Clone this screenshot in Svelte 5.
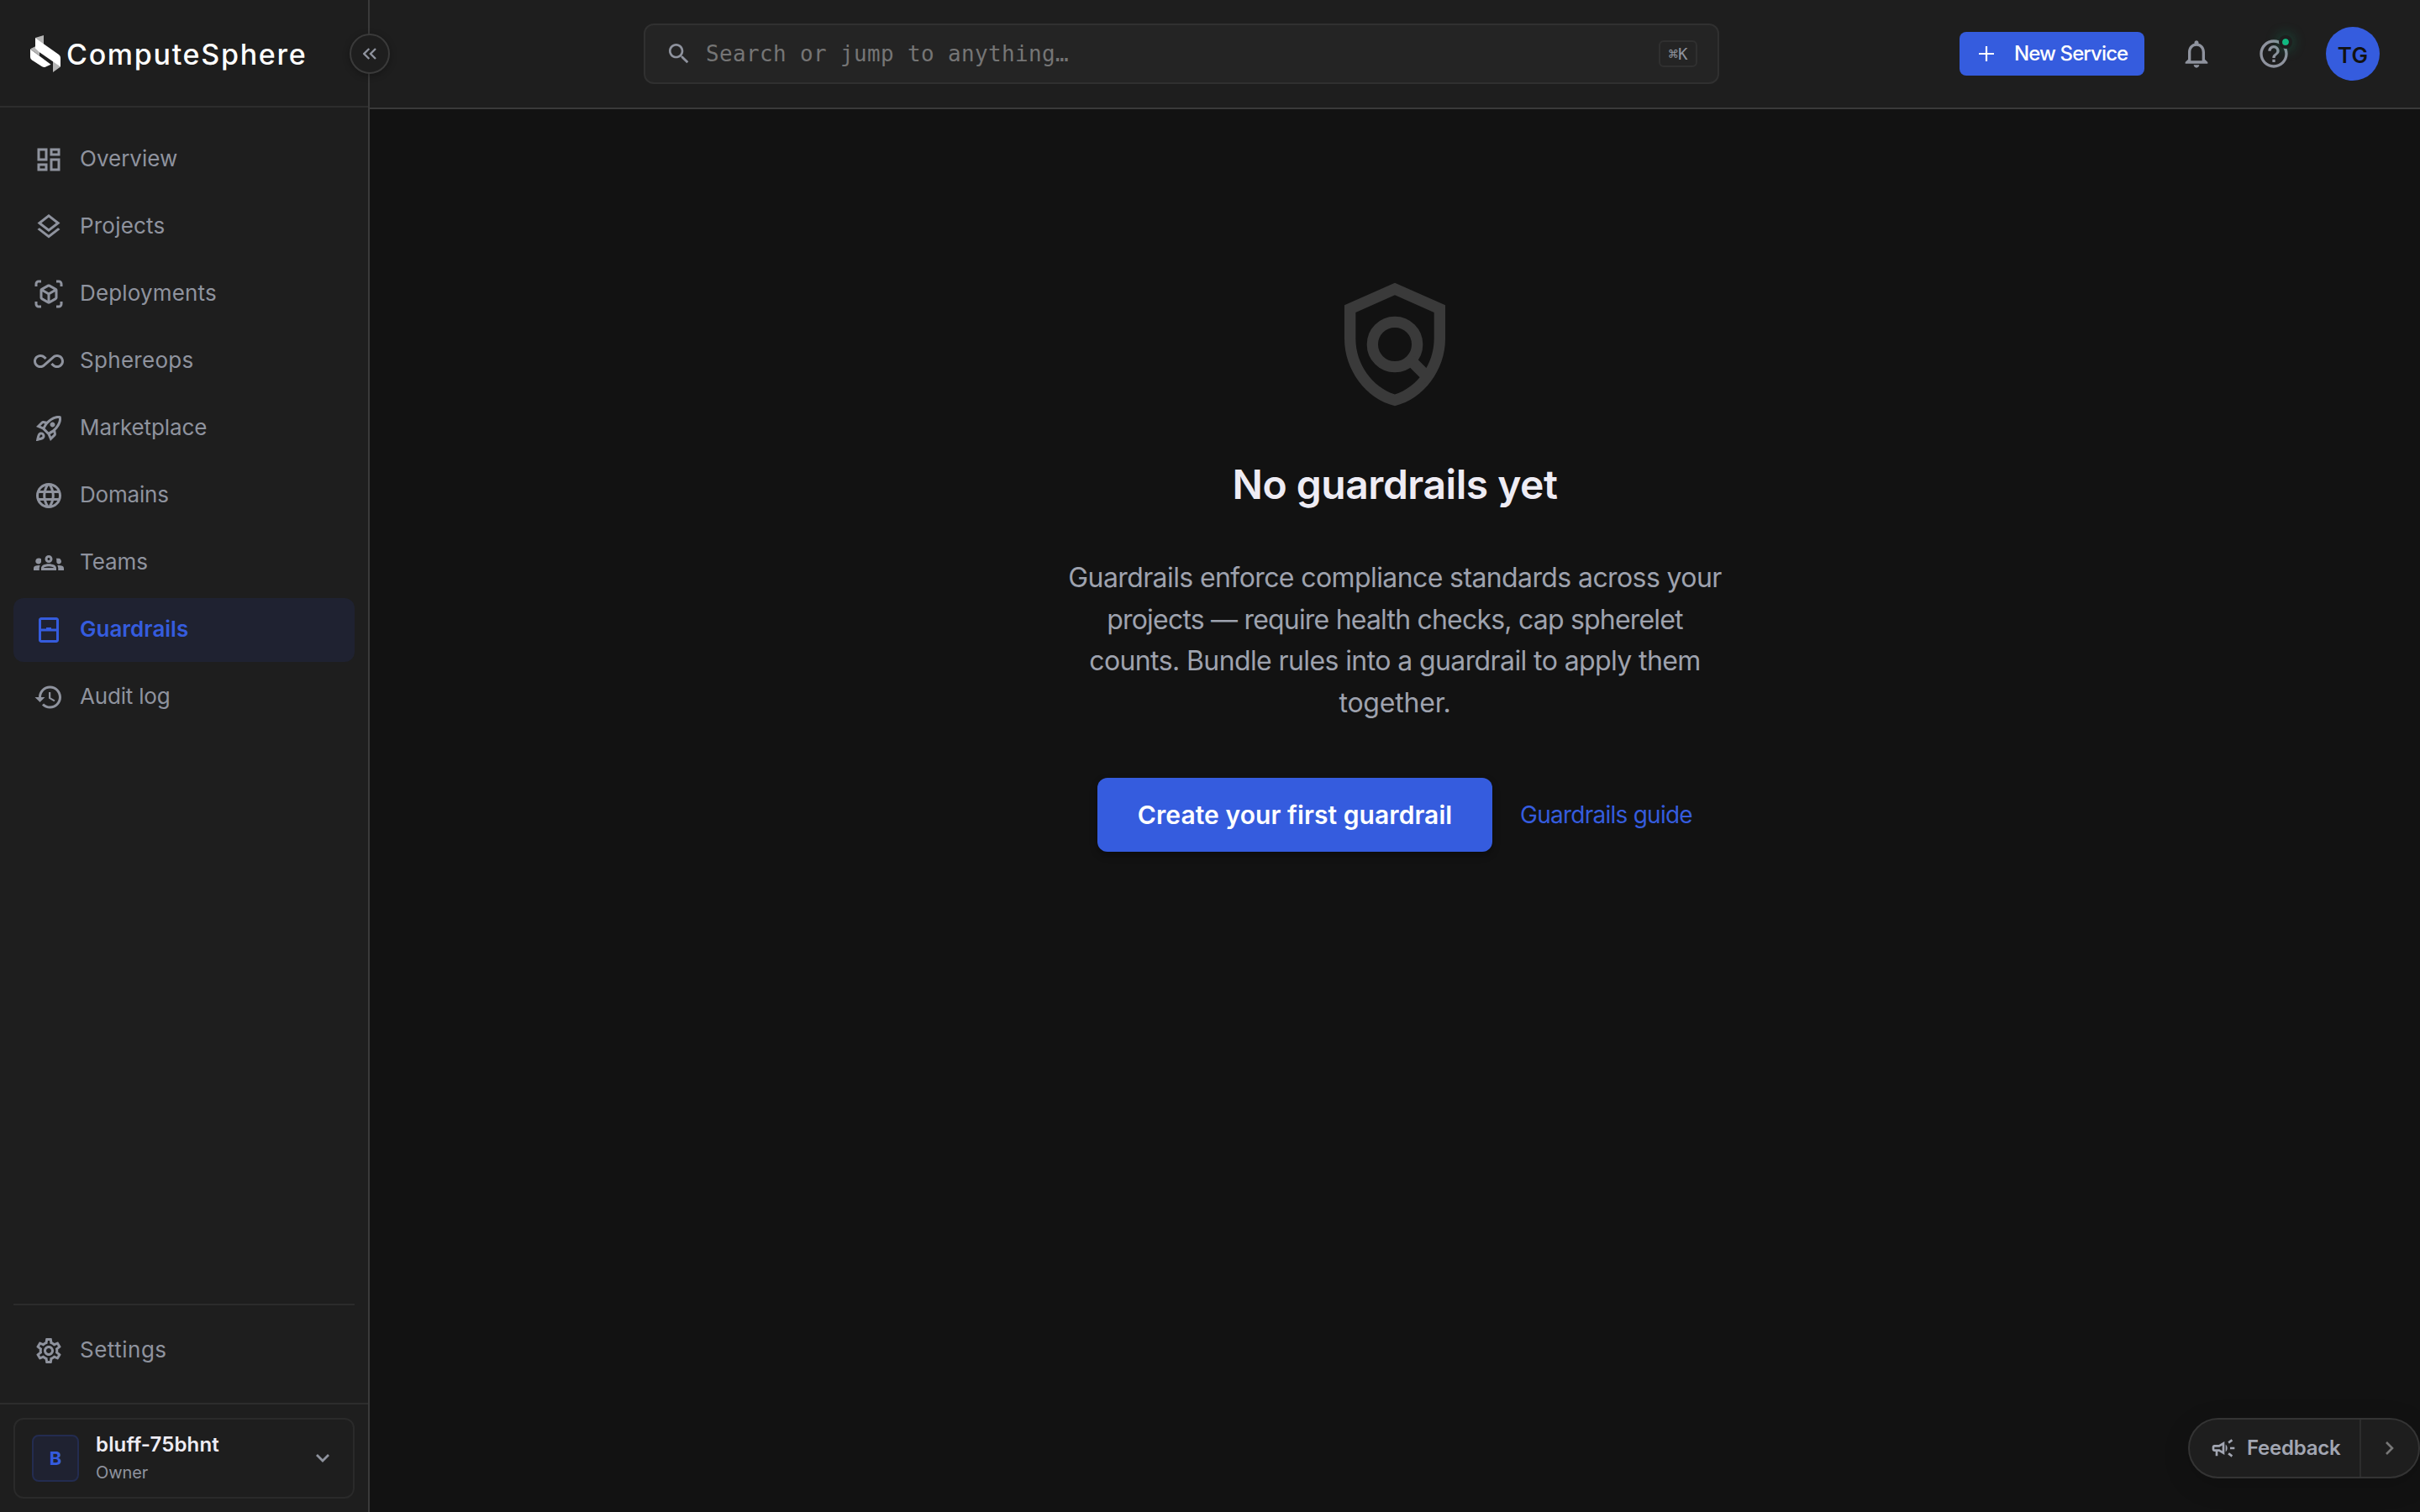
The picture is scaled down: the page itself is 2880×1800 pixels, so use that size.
<script>
	const NAV = [
		{ id: 'overview', label: 'Overview', tracking: 0 },
		{ id: 'projects', label: 'Projects', tracking: 0.2 },
		{ id: 'deployments', label: 'Deployments', tracking: 0.15 },
		{ id: 'sphereops', label: 'Sphereops', tracking: 0.3 },
		{ id: 'marketplace', label: 'Marketplace', tracking: -0.1 },
		{ id: 'domains', label: 'Domains', tracking: -0.2 },
		{ id: 'teams', label: 'Teams', tracking: -0.1 },
		{ id: 'guardrails', label: 'Guardrails', tracking: 0 },
		{ id: 'audit', label: 'Audit log', tracking: -0.2 },
	];

	const COPY = [
		{ text: 'Guardrails enforce compliance standards across your', tracking: -0.6 },
		{ text: 'projects — require health checks, cap spherelet', tracking: -0.8 },
		{ text: 'counts. Bundle rules into a guardrail to apply them', tracking: -0.6 },
		{ text: 'together.', tracking: -0.2 },
	];

	const ICONS = {
		overview: 'M19 5v2h-4V5h4M9 5v6H5V5h4m10 8v6h-4v-6h4M9 17v2H5v-2h4M21 3h-8v6h8V3zM11 3H3v10h8V3zm10 8h-8v10h8V11zm-10 4H3v6h8v-6z',
		projects: 'M11.99 18.54l-7.37-5.73L3 14.07l9 7 9-7-1.63-1.27zM12 16l7.36-5.73L21 9l-9-7-9 7 1.63 1.27L12 16zm0-11.47L17.74 9 12 13.47 6.26 9 12 4.53z',
		deployments: 'M3 4c0-.55.45-1 1-1h2V1H4C2.34 1 1 2.34 1 4v2h2V4zM3 20v-2H1v2c0 1.66 1.34 3 3 3h2v-2H4c-.55 0-1-.45-1-1zM20 1h-2v2h2c.55 0 1 .45 1 1v2h2V4c0-1.66-1.34-3-3-3zM21 20c0 .55-.45 1-1 1h-2v2h2c1.66 0 3-1.34 3-3v-2h-2v2zM19 14.87V9.13c0-.72-.38-1.38-1-1.73l-5-2.88c-.31-.18-.65-.27-1-.27s-.69.09-1 .27L6 7.39c-.62.36-1 1.02-1 1.74v5.74c0 .72.38 1.38 1 1.73l5 2.88c.31.18.65.27 1 .27s.69-.09 1-.27l5-2.88c.62-.35 1-1.01 1-1.73zm-8 2.3l-4-2.3v-4.63l4 2.33v4.6zm1-6.33L8.04 8.53 12 6.25l3.96 2.28L12 10.84zm5 4.03l-4 2.3v-4.6l4-2.33v4.63z',
		sphereops: 'M18.6 6.62c-1.44 0-2.8.56-3.77 1.53L7.8 14.39c-.64.64-1.49.99-2.4.99-1.87 0-3.39-1.51-3.39-3.38S3.53 8.62 5.4 8.62c.91 0 1.76.35 2.44 1.03l1.13 1 1.51-1.34L9.22 8.2C8.2 7.18 6.84 6.62 5.4 6.62 2.42 6.62 0 9.04 0 12s2.42 5.38 5.4 5.38c1.44 0 2.8-.56 3.77-1.53l7.03-6.24c.64-.64 1.49-.99 2.4-.99 1.87 0 3.39 1.51 3.39 3.38s-1.52 3.38-3.39 3.38c-.9 0-1.76-.35-2.44-1.03l-1.14-1.01-1.51 1.34 1.27 1.12c1.02 1.01 2.37 1.57 3.82 1.57 2.98 0 5.4-2.41 5.4-5.38s-2.42-5.37-5.4-5.37z',
		marketplace: 'M6 15c-.83 0-1.58.34-2.12.88C2.7 17.06 2 22 2 22s4.94-.7 6.12-1.88C8.66 19.58 9 18.83 9 18c0-1.66-1.34-3-3-3zm.71 3.71c-.28.28-2.17.76-2.17.76s.47-1.88.76-2.17c.17-.19.42-.3.7-.3.55 0 1 .45 1 1 0 .28-.11.53-.29.71zm10.71-5.06c6.36-6.36 4.24-11.31 4.24-11.31S16.71.22 10.35 6.58l-2.49-.5c-.65-.13-1.33.08-1.81.55L2 10.69l5 2.14L11.17 17l2.14 5 4.05-4.05c.47-.47.68-1.15.55-1.81l-.49-2.49zM7.41 10.83l-1.91-.82 1.97-1.97 1.44.29c-.57.83-1.08 1.7-1.5 2.5zm6.58 7.67-.82-1.91c.8-.42 1.67-.93 2.49-1.5l.29 1.44-1.96 1.97zM16 12.24c-1.32 1.32-3.38 2.4-4.04 2.73l-2.93-2.93c.32-.65 1.4-2.71 2.73-4.04 4.68-4.68 8.23-3.99 8.23-3.99s.69 3.55-3.99 8.23zM15 11c1.1 0 2-.9 2-2s-.9-2-2-2-2 .9-2 2 .9 2 2 2z',
		domains: 'M11.99 2C6.47 2 2 6.48 2 12s4.47 10 9.99 10C17.52 22 22 17.52 22 12S17.52 2 11.99 2zm6.93 6h-2.95c-.32-1.25-.78-2.45-1.38-3.56 1.84.63 3.37 1.91 4.33 3.56zM12 4.04c.83 1.2 1.48 2.53 1.91 3.96h-3.82c.43-1.43 1.08-2.76 1.91-3.96zM4.26 14C4.1 13.36 4 12.69 4 12s.1-1.36.26-2h3.38c-.08.66-.14 1.32-.14 2s.06 1.34.14 2H4.26zm.82 2h2.95c.32 1.25.78 2.45 1.38 3.56-1.84-.63-3.37-1.9-4.33-3.56zm2.95-8H5.08c.96-1.66 2.49-2.93 4.33-3.56C8.81 5.55 8.35 6.75 8.03 8zM12 19.96c-.83-1.2-1.48-2.53-1.91-3.96h3.82c-.43 1.43-1.08 2.76-1.91 3.96zM14.34 14H9.66c-.09-.66-.16-1.32-.16-2s.07-1.35.16-2h4.68c.09.65.16 1.32.16 2s-.07 1.34-.16 2zm.25 5.56c.6-1.11 1.06-2.31 1.38-3.56h2.95c-.96 1.65-2.49 2.93-4.33 3.56zM16.36 14c.08-.66.14-1.32.14-2s-.06-1.34-.14-2h3.38c.16.64.26 1.31.26 2s-.1 1.36-.26 2h-3.38z',
		teams: 'M4 13c1.1 0 2-.9 2-2V8.8c-.5-.3-1-.4-1.6-.4H4c-1.500 0-2.500 1-2.500 2.400 0 1.200 1.100 2.200 2.500 2.200zm1.130 1.100C4.760 14.040 4.390 14 4 14c-.99 0-1.930.210-2.780.580C.480 14.900 0 15.620 0 16.430V18h4.500v-1.610c0-.830.230-1.610.630-2.290zM20 13c1.100 0 2-.9 2-2s-.9-2.500-2-2.500h-2.200c.5.5.4 1.200.4 2.500 0 1.100.7 2 1.800 2zm4 3.430c0-.810-.480-1.530-1.220-1.850-.850-.370-1.790-.580-2.780-.580-.390 0-.760.040-1.130.100.400.680.630 1.460.630 2.290V18H24v-1.570zM16.240 13.650c-1.170-.520-2.610-.9-4.240-.9s-3.070.390-4.240.9C6.680 14.130 6 15.210 6 16.390V18h12v-1.610c0-1.180-.680-2.260-1.760-2.740zM8.070 16c.090-.230.130-.390.910-.690.970-.380 1.990-.560 3.020-.560s2.050.180 3.020.560c.770.300.810.460.910.690H8.070zM12 8c.550 0 1 .450 1 1s-.450 1-1 1-1-.450-1-1 .450-1 1-1m0-2c-1.660 0-3 1.340-3 3s1.340 3 3 3 3-1.340 3-3-1.340-3-3-3z',
		guardrails: 'M18 2H6c-1.100 0-2 .9-2 2v16c0 1.100.9 2 2 2h12c1.100 0 2-.9 2-2V4c0-1.100-.9-2-2-2zm0 2v7h-4v-1h-4v1H6V4h12zM6 20v-7h12v7H6z',
		audit: 'M13 3c-4.970 0-9 4.030-9 9H1l3.890 3.890.070.140L9 12H6c0-3.870 3.130-7 7-7s7 3.130 7 7-3.130 7-7 7c-1.930 0-3.680-.790-4.940-2.060l-1.420 1.420C8.270 19.990 10.510 21 13 21c4.970 0 9-4.030 9-9s-4.030-9-9-9zm-1 5v5l4.280 2.540.720-1.210-3.500-2.080V8H12z',
		settings: 'M19.430 12.980c.040-.320.070-.640.070-.980 0-.340-.030-.660-.070-.980l2.110-1.650c.190-.150.240-.420.120-.640l-2-3.460c-.090-.160-.260-.250-.440-.250-.060 0-.120.010-.170.030l-2.490 1c-.520-.400-1.080-.730-1.690-.980l-.380-2.650C14.460 2.180 14.250 2 14 2h-4c-.250 0-.460.180-.490.420l-.380 2.650c-.610.250-1.170.590-1.690.980l-2.490-1c-.060-.020-.120-.030-.180-.030-.170 0-.340.090-.430.250l-2 3.460c-.130.220-.070.490.120.640l2.110 1.650c-.040.320-.070.650-.070.980 0 .330.030.660.070.980l-2.110 1.650c-.190.150-.240.420-.120.640l2 3.460c.090.160.260.250.440.250.060 0 .120-.010.170-.030l2.490-1c.520.400 1.080.730 1.690.980l.380 2.650c.030.240.240.420.490.420h4c.250 0 .460-.180.490-.420l.380-2.650c.610-.250 1.170-.590 1.690-.980l2.490 1c.060.020.120.030.180.030.170 0 .340-.090.430-.250l2-3.460c.120-.220.070-.490-.120-.640l-2.110-1.650zm-1.980-1.710c.040.310.050.520.050.730 0 .210-.020.430-.050.730l-.140 1.130.890.700 1.080.840-.700 1.210-1.270-.510-1.040-.420-.9.680c-.430.320-.840.560-1.250.730l-1.060.430-.160 1.130-.200 1.350h-1.400l-.190-1.350-.160-1.130-1.060-.430c-.430-.180-.830-.410-1.230-.710l-.910-.700-1.060.430-1.270.510-.700-1.210 1.080-.840.890-.700-.140-1.130c-.030-.310-.050-.540-.050-.740s.020-.430.050-.730l.140-1.130-.890-.700-1.080-.840.700-1.210 1.270.510 1.040.420.9-.680c.430-.320.840-.560 1.250-.730l1.060-.430.160-1.130.200-1.350h1.390l.190 1.350.160 1.130 1.060.430c.430.180.830.410 1.230.710l.910.700 1.060-.430 1.270-.510.700 1.210-1.070.850-.890.700.140 1.130zM12 8c-2.210 0-4 1.790-4 4s1.790 4 4 4 4-1.790 4-4-1.790-4-4-4zm0 6c-1.100 0-2-.9-2-2s.9-2 2-2 2 .9 2 2-.9 2-2 2z',
		search: 'M15.500 14h-.790l-.280-.270C15.410 12.590 16 11.110 16 9.500 16 5.910 13.090 3 9.500 3S3 5.910 3 9.500 5.910 16 9.500 16c1.610 0 3.090-.590 4.230-1.570l.270.280v.790l5 4.990L20.490 19l-4.990-5zm-6 0C7.010 14 5 11.990 5 9.500S7.010 5 9.500 5 14 7.010 14 9.500 11.990 14 9.500 14z',
		bell: 'M12 22c1.100 0 2-.9 2-2h-4c0 1.100.9 2 2 2zm6-6v-5c0-3.070-1.630-5.640-4.500-6.320V4c0-.830-.670-1.500-1.500-1.500s-1.500.670-1.500 1.500v.680C7.640 5.360 6 7.920 6 11v5l-2 2v1h16v-1l-2-2zm-2 1H8v-6c0-2.480 1.510-4.500 4-4.500s4 2.020 4 4.500v6z',
		help: 'M11 18h2v-2h-2v2zm1-16C6.480 2 2 6.480 2 12s4.480 10 10 10 10-4.480 10-10S17.520 2 12 2zm0 18c-4.410 0-8-3.590-8-8s3.590-8 8-8 8 3.590 8 8-3.590 8-8 8zm0-14c-2.210 0-4 1.790-4 4h2c0-1.100.9-2 2-2s2 .9 2 2c0 2-3 1.750-3 5h2c0-2.250 3-2.500 3-5 0-2.210-1.790-4-4-4z',
		campaign: 'M18 11c0 .670 0 1.330 0 2 1.200 0 2.760 0 4 0 0-.670 0-1.330 0-2-1.240 0-2.800 0-4 0zM16 17.610c.960.710 2.210 1.650 3.200 2.390.400-.530.800-1.070 1.200-1.600-.990-.740-2.240-1.680-3.200-2.400-.400.540-.800 1.080-1.200 1.610zM20.400 5.600c-.400-.530-.800-1.070-1.200-1.600-.990.740-2.240 1.680-3.200 2.400.400.530.800 1.070 1.200 1.600.960-.720 2.210-1.650 3.200-2.400zM4 9c-1.100 0-2 .9-2 2v2c0 1.100.9 2 2 2h1v4h2v-4h1l5 3V6L8 9H4zm5.030 1.710L11 9.530v4.940l-1.970-1.180-.480-.290H4v-2h4.550l.480-.290zM15.500 12c0-1.330-.580-2.530-1.500-3.350v6.690c.920-.810 1.500-2.010 1.500-3.340z',
	};

	let active = $state('guardrails');
</script>

{#snippet icon(name)}
	<svg class="icon" viewBox="0 0 24 24" aria-hidden="true"><path d={ICONS[name]} /></svg>
{/snippet}

<div class="shell">
	<aside class="sidebar">
		<div class="brand">
			<svg class="brand-mark" viewBox="0 0 36 44" aria-hidden="true">
				<path d="M6 3 16 0v11L6 4zM0 16.300 6 13.300l5 6V24.500zM27 30v14l9-6.500z" fill="#b5b5b5" />
				<path d="M6 3.300 34 23q2 1.500 2 3.500v11L10.700 20 6 15.500z" fill="#fff" />
				<path d="M0 16.500 24.500 34.700 18 37.800q-2 .8-4-.5L2 29.500q-2-1.500-2-3.500z" fill="#fff" />
			</svg>
			<span class="brand-name">ComputeSphere</span>
		</div>

		<nav class="nav">
			{#each NAV as item}
				<button class="nav-item" class:active={active === item.id} onclick={() => (active = item.id)}>
					{@render icon(item.id)}
					<span style:letter-spacing="{item.tracking}px">{item.label}</span>
				</button>
			{/each}
		</nav>

		<div class="nav-bottom">
			<button class="nav-item">
				{@render icon('settings')}
				<span class="settings-label">Settings</span>
			</button>
		</div>

		<div class="account">
			<button class="account-card">
				<span class="account-badge">B</span>
				<span class="account-text">
					<span class="account-name">bluff-75bhnt</span>
					<span class="account-role">Owner</span>
				</span>
				<svg class="account-chevron" viewBox="0 0 18 12" aria-hidden="true"><path d="M2 2l7 7 7-7" /></svg>
			</button>
		</div>

		<button class="collapse" title="Collapse sidebar">
			<svg viewBox="0 0 16 14" aria-hidden="true"><path d="M7.300 1 1.300 7l6 6M15 1 9 7l6 6" /></svg>
		</button>
	</aside>

	<div class="content">
		<header class="topbar">
			<div class="search">
				{@render icon('search')}
				<span class="search-text">Search or jump to anything…</span>
				<kbd>⌘K</kbd>
			</div>
			<div class="actions">
				<button class="new-service">
					<svg viewBox="0 0 18 18" aria-hidden="true"><path d="M9 0v18M0 9h18" /></svg>
					<span>New Service</span>
				</button>
				<button class="icon-btn bell" title="Notifications">{@render icon('bell')}</button>
				<button class="icon-btn help" title="Help">
					{@render icon('help')}
					<i class="dot"></i>
				</button>
				<div class="avatar">TG</div>
			</div>
		</header>

		<main class="empty">
			<svg class="shield" viewBox="0 0 24 24" aria-hidden="true">
				<path fill-rule="evenodd" d="M12 1 3 5v6c0 5.550 3.840 10.740 9 12 5.160-1.260 9-6.450 9-12V5l-9-4zm0 2.190 7 3.110V11c0 4.520-2.980 8.690-7 9.930-4.020-1.240-7-5.410-7-9.930V6.300l7-3.110z" />
				<circle cx="12" cy="12" r="4" />
				<path class="handle" d="M14.800 14.800l3.300 3.300" />
			</svg>
			<h1>No guardrails yet</h1>
			<p>
				{#each COPY as line}
					<span style:letter-spacing="{line.tracking}px">{line.text}</span>
				{/each}
			</p>
			<div class="cta-row">
				<button class="cta">Create your first guardrail</button>
				<a class="guide" href="#guide">Guardrails guide</a>
			</div>
		</main>
	</div>

	<div class="feedback">
		<button class="feedback-main">
			{@render icon('campaign')}
			<span>Feedback</span>
		</button>
		<button class="feedback-toggle" title="Hide">
			<svg viewBox="0 0 12 18" aria-hidden="true"><path d="M2 2l7 7-7 7" /></svg>
		</button>
	</div>
</div>

<style>
	:global(body) {
		background: #121212;
	}

	.shell {
		position: relative;
		display: flex;
		width: 2880px;
		height: 1800px;
		overflow: hidden;
		background: #121212;
		color: #8f939e;
		font-family: Inter, 'Liberation Sans', sans-serif;
	}

	button {
		margin: 0;
		padding: 0;
		border: none;
		background: none;
		color: inherit;
		font: inherit;
		cursor: pointer;
	}

	span { white-space: nowrap; }

	.icon {
		display: block;
		width: 36px;
		height: 36px;
		fill: currentColor;
		flex-shrink: 0;
	}

	/* sidebar */
	.sidebar {
		position: relative;
		z-index: 2;
		display: flex;
		flex-direction: column;
		box-sizing: border-box;
		width: 440px;
		flex-shrink: 0;
		background: #1e1e1e;
		border-right: 2px solid #3a3a3a;
	}

	.brand {
		display: flex;
		align-items: center;
		gap: 7px;
		box-sizing: border-box;
		height: 128px;
		padding: 2px 0 0 36px;
		border-bottom: 2px solid #2d2d2d;
	}
	.brand-mark {
		width: 36px;
		height: 44px;
	}
	.brand-name {
		color: #fff;
		font-size: 34px;
		font-weight: 500;
		letter-spacing: 1.7px;
	}

	.nav {
		display: flex;
		flex-direction: column;
		gap: 4px;
		padding: 24px 16px;
		flex: 1;
	}
	.nav-item {
		display: flex;
		align-items: center;
		gap: 19px;
		box-sizing: border-box;
		width: 406px;
		height: 76px;
		padding-left: 24px;
		border-radius: 12px;
		font-size: 26px;
	}
	.nav-item span { padding-bottom: 3px; }
	.nav-item.active {
		background: #1f2231;
		color: #355cde;
		font-weight: 600;
	}

	.nav-bottom {
		margin: 0 16px;
		padding: 16px 0 24px;
		border-top: 2px solid #2b2b2b;
	}
	.settings-label { letter-spacing: 0.5px; }

	.account {
		padding: 16px;
		border-top: 2px solid #2d2d2d;
	}
	.account-card {
		display: flex;
		align-items: center;
		box-sizing: border-box;
		width: 406px;
		height: 96px;
		padding: 0 27px 0 20px;
		border: 2px solid #2a2a2a;
		border-radius: 12px;
		text-align: left;
	}
	.account-badge {
		display: flex;
		align-items: center;
		justify-content: center;
		box-sizing: border-box;
		width: 56px;
		height: 56px;
		border: 2px solid #232c50;
		border-radius: 8px;
		background: #1f2231;
		color: #355cde;
		font-size: 22px;
		font-weight: 700;
	}
	.account-text {
		display: flex;
		flex-direction: column;
		margin-left: 20px;
		flex: 1;
	}
	.account-name {
		color: #eeecf4;
		font-size: 24px;
		font-weight: 600;
		line-height: 32px;
		padding-bottom: 2px;
		letter-spacing: 0.15px;
	}
	.account-role {
		font-size: 20px;
		line-height: 30px;
		letter-spacing: -0.1px;
	}
	.account-chevron {
		width: 18px;
		height: 12px;
		fill: none;
		stroke: currentColor;
		stroke-width: 2.8;
	}

	.collapse {
		position: absolute;
		top: 40px;
		right: -26px;
		display: flex;
		align-items: center;
		justify-content: center;
		box-sizing: border-box;
		width: 48px;
		height: 48px;
		border: 2px solid #3a3a3a;
		border-radius: 50%;
		background: #1e1e1e;
		box-shadow: 0 2px 8px rgba(0, 0, 0, 0.3);
	}
	.collapse svg {
		width: 16px;
		height: 14px;
		fill: none;
		stroke: currentColor;
		stroke-width: 2.4;
	}

	/* top bar */
	.content {
		display: flex;
		flex-direction: column;
		flex: 1;
	}
	.topbar {
		display: flex;
		align-items: center;
		justify-content: space-between;
		box-sizing: border-box;
		height: 130px;
		padding: 0 48px 0 326px;
		background: #1e1e1e;
		border-bottom: 2px solid #3a3a3a;
	}
	.search {
		display: flex;
		align-items: center;
		box-sizing: border-box;
		width: 1280px;
		height: 72px;
		padding: 0 24px;
		border: 2px solid #303030;
		border-radius: 12px;
		background: #242424;
	}
	.search .icon {
		width: 32px;
		height: 32px;
	}
	.search-text {
		flex: 1;
		margin-left: 16px;
		color: #757575;
		font-family: 'DejaVu Sans Mono', monospace;
		font-size: 26px;
		letter-spacing: 0.35px;
	}
	kbd {
		display: flex;
		align-items: center;
		justify-content: center;
		box-sizing: border-box;
		width: 46px;
		height: 32px;
		border: 2px solid #303030;
		border-radius: 6px;
		font-family: 'DejaVu Sans Mono', monospace;
		font-size: 19px;
	}

	.actions {
		display: flex;
		align-items: center;
	}
	.new-service {
		display: flex;
		align-items: center;
		box-sizing: border-box;
		width: 220px;
		height: 52px;
		padding-left: 23px;
		border-radius: 8px;
		background: #355cde;
		color: #fff;
		font-size: 24px;
		font-weight: 500;
		letter-spacing: -0.9px;
	}
	.new-service svg {
		width: 18px;
		height: 18px;
		margin-right: 24px;
		stroke: #fff;
		stroke-width: 2.2;
	}
	.new-service span { padding-bottom: 1px; }
	.icon-btn .icon {
		width: 40px;
		height: 40px;
	}
	.bell { margin-left: 42px; }
	.help {
		position: relative;
		margin-left: 52px;
	}
	.dot {
		position: absolute;
		top: -2px;
		right: -2px;
		width: 8px;
		height: 8px;
		border: 4px solid #1e1e1e;
		border-radius: 50%;
		background: #10b981;
		background-clip: padding-box;
		box-shadow: 0 0 16px rgba(16, 185, 129, 0.4);
	}
	.avatar {
		display: flex;
		align-items: center;
		justify-content: center;
		box-sizing: border-box;
		width: 64px;
		height: 64px;
		margin-left: 42px;
		padding-top: 2px;
		border-radius: 50%;
		background: #355cde;
		color: #121212;
		font-size: 26px;
		font-weight: 600;
		letter-spacing: 0.3px;
	}

	/* empty state */
	.empty {
		display: flex;
		flex-direction: column;
		align-items: center;
		padding-top: 200px;
	}
	.shield {
		width: 160px;
		height: 160px;
		fill: #3a3a3a;
	}
	.shield circle,
	.shield .handle {
		fill: none;
		stroke: #3a3a3a;
		stroke-width: 2;
	}
	h1 {
		margin: 54px 0 0;
		color: #eeecf4;
		font-size: 48px;
		font-weight: 600;
		line-height: 66px;
		letter-spacing: -0.48px;
		white-space: nowrap;
	}
	p {
		display: flex;
		flex-direction: column;
		align-items: center;
		margin: 53px 0 0;
		color: #9ea2ae;
		font-size: 32px;
		line-height: 49.6px;
	}
	.cta-row {
		display: flex;
		align-items: center;
		gap: 33px;
		margin-top: 65px;
	}
	.cta {
		width: 470px;
		height: 88px;
		border-radius: 12px;
		background: #355cde;
		box-shadow: 0 4px 8px rgba(0, 0, 0, 0.35);
		color: #fff;
		font-size: 30px;
		font-weight: 600;
		letter-spacing: 0.07px;
		white-space: nowrap;
	}
	.guide {
		color: #355cde;
		font-size: 28px;
		letter-spacing: -0.75px;
		text-decoration: none;
		white-space: nowrap;
	}

	.feedback {
		position: absolute;
		right: 0;
		bottom: 40px;
		display: flex;
		box-sizing: border-box;
		width: 276px;
		height: 72px;
		border: 2px solid #343434;
		border-radius: 36px;
		background: #1e1e1e;
		box-shadow: 0 8px 32px rgba(0, 0, 0, 0.15);
		color: #a2a6b2;
	}
	.feedback-main {
		display: flex;
		align-items: center;
		box-sizing: border-box;
		width: 204px;
		padding-left: 24px;
		border-right: 2px solid #2d2d2d;
		font-size: 24px;
		font-weight: 600;
		letter-spacing: -0.25px;
	}
	.feedback-main .icon {
		width: 32px;
		height: 32px;
		margin-right: 12px;
	}
	.feedback-main span { padding-bottom: 2px; }
	.feedback-toggle {
		flex: 1;
		display: flex;
		align-items: center;
		justify-content: center;
	}
	.feedback-toggle svg {
		width: 12px;
		height: 18px;
		fill: none;
		stroke: #777;
		stroke-width: 2.6;
	}
</style>
